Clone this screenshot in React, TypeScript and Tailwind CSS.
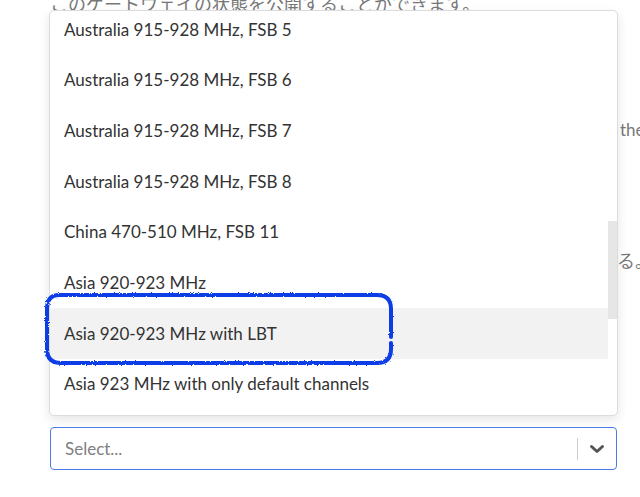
const OPTIONS = [
  "Australia 915-928 MHz, FSB 5",
  "Australia 915-928 MHz, FSB 6",
  "Australia 915-928 MHz, FSB 7",
  "Australia 915-928 MHz, FSB 8",
  "China 470-510 MHz, FSB 11",
  "Asia 920-923 MHz",
  "Asia 920-923 MHz with LBT",
  "Asia 923 MHz with only default channels",
];

export default function App() {
  const focused = "Asia 920-923 MHz with LBT";

  return (
    <div className="relative h-[497px] w-[640px] overflow-hidden bg-white font-['Lato',sans-serif]">
      {/* page text behind the open menu */}
      <div className="-mt-[10px] whitespace-nowrap pl-[50px] font-['Noto_Sans_CJK_JP',sans-serif] text-[18px] leading-[26px] text-[#777]">
        このゲートウェイの状態を公開することができます。
      </div>
      <div className="mt-[101px] whitespace-nowrap pl-[620px] text-[17px] leading-[26px] text-[#777]">the</div>
      <div className="mt-[104px] whitespace-nowrap pl-[617px] font-['Noto_Sans_CJK_JP',sans-serif] text-[18px] leading-[26px] text-[#777]">
        る。
      </div>

      {/* select control */}
      <div className="ml-[50px] mt-[154px] flex h-[43px] w-[567px] items-center rounded-[4px] border border-[#4b7be5] bg-white">
        <span className="flex-1 pl-[14px] text-[17px] text-[#808080]">Select...</span>
        <span className="h-[22px] w-px bg-[#cccccc]" />
        <span className="flex w-[38px] items-center justify-center text-[#555]">
          <svg width="16" height="10" viewBox="0 0 16 10" fill="none" stroke="currentColor" strokeWidth="3" strokeLinecap="round" strokeLinejoin="round">
            <path d="M2.5 2.5 8 7.5 13.5 2.5" />
          </svg>
        </span>
      </div>

      {/* open menu */}
      <div className="absolute left-[49px] top-[10px] h-[406px] w-[569px] overflow-hidden rounded-[5px] border border-[#dcdcdc] bg-white shadow-[0_4px_11px_rgba(0,0,0,0.1)]">
        <div className="-mt-[7px] pr-[9px]">
          {OPTIONS.map((o) => (
            <div
              key={o}
              className={`flex h-[50.7px] items-center px-[14px] text-[17px] text-[#333] ${o === focused ? "bg-[#f2f2f2]" : ""}`}
            >
              {o}
            </div>
          ))}
        </div>
        <div className="absolute right-0 top-[210px] h-[98px] w-[9px] bg-[#e6e6e6]" />
      </div>

      {/* hand-drawn highlight */}
      <svg className="absolute left-[41px] top-[289px]" width="356" height="80" viewBox="0 0 356 80">
        <defs>
          <filter id="rough" x="-5%" y="-10%" width="110%" height="120%">
            <feTurbulence type="fractalNoise" baseFrequency="0.9" numOctaves="2" seed="3" />
            <feDisplacementMap in="SourceGraphic" scale="2.5" />
          </filter>
        </defs>
        <path
          d="M350 54 V60 Q350 74 336 74 H20 Q6 74 6 60 V20 Q6 6 18 6 H336 Q350 6 350 20 V48"
          fill="none"
          stroke="#0b3de6"
          strokeWidth="4"
          strokeLinecap="round"
          filter="url(#rough)"
        />
      </svg>
    </div>
  );
}
